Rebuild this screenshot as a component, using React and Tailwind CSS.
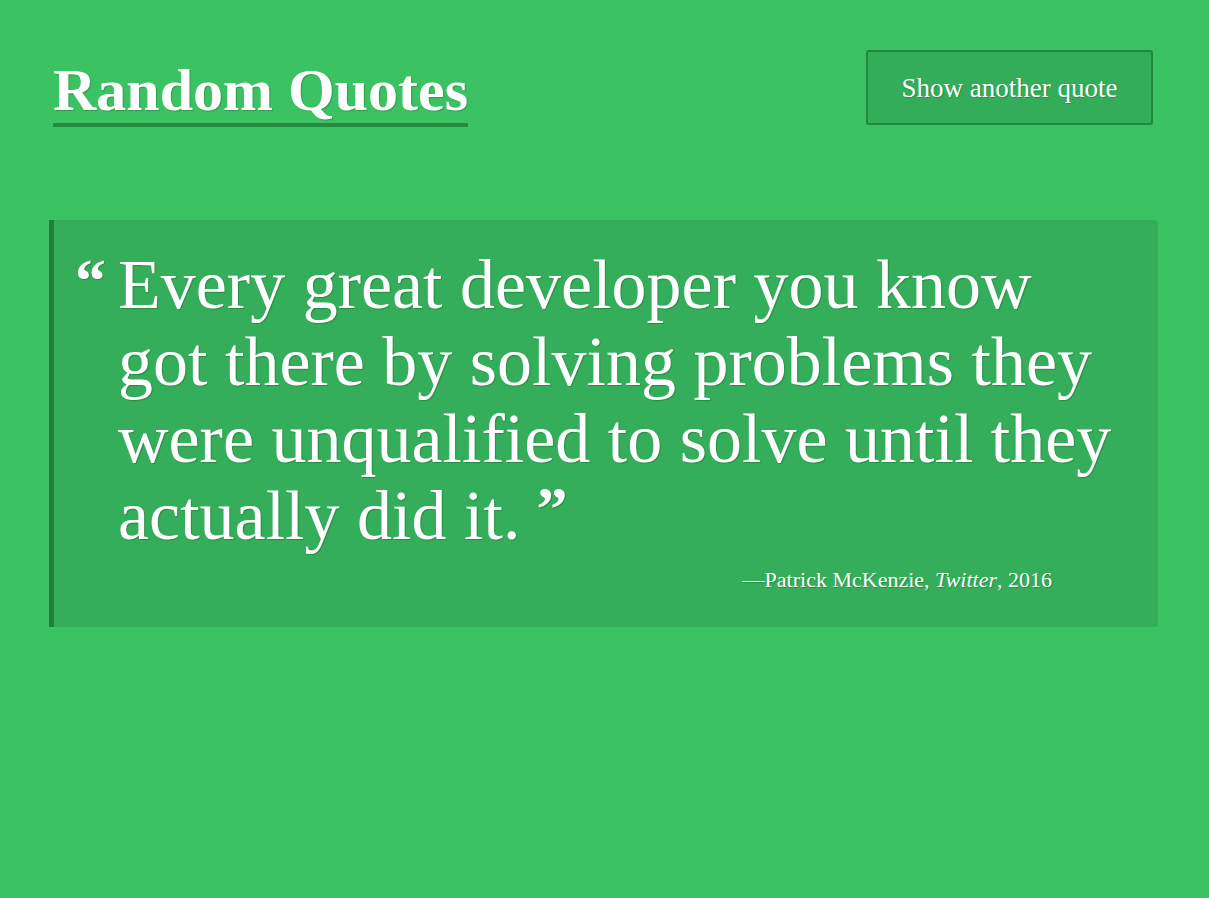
import React from 'react';

const serif = { fontFamily: '"Liberation Serif", "DejaVu Serif", serif' };

const quote = {
  lines: [
    'Every great developer you know',
    'got there by solving problems they',
    'were unqualified to solve until they',
    'actually did it.',
  ],
  author: 'Patrick McKenzie',
  source: 'Twitter',
  year: '2016',
};

export default function App() {
  return (
    <div className="min-h-[898px] bg-[#3bc262] text-white" style={serif}>
      <div className="pl-[49px] pr-[51px] pt-[50px]">
        <header className="flex items-start justify-between pl-[4px] pr-[5px]">
          <h1 className="mt-[10px] border-b-[4px] border-[#27893f] pb-[3px] text-[60px] font-bold leading-[60px] [text-shadow:1px_1px_1px_rgba(0,0,0,0.2)]">
            Random Quotes
          </h1>
          <button className="h-[75px] w-[287px] rounded-[3px] border-2 border-[#25863e] bg-[#33ad59] pt-[2px] text-[27px] [text-shadow:1px_1px_1px_rgba(0,0,0,0.2)]">
            Show another quote
          </button>
        </header>

        <blockquote className="mt-[93px] rounded-r-[4px] border-l-[5px] border-[#23803c] bg-[#34ae5a] pb-[33px] pl-[21px] pr-[106px] pt-[26px] [text-shadow:1px_1px_1px_rgba(0,0,0,0.2)]">
          <div className="flex">
            <span className="w-[43px] shrink-0 pt-[8px] text-[62px] font-bold leading-[52px]">“</span>
            <p className="text-[70px] leading-[77px]">
              {quote.lines.map((l, i) => (
                <span key={i} className="block whitespace-nowrap">
                  {l}
                  {i === quote.lines.length - 1 && (
                    <span className="ml-[16px] inline-block align-top text-[62px] font-bold leading-[62px]">”</span>
                  )}
                </span>
              ))}
            </p>
          </div>
          <p className="mt-[12px] text-right text-[22px] leading-[28px]">
            —{quote.author}, <em>{quote.source}</em>, {quote.year}
          </p>
        </blockquote>
      </div>
    </div>
  );
}
